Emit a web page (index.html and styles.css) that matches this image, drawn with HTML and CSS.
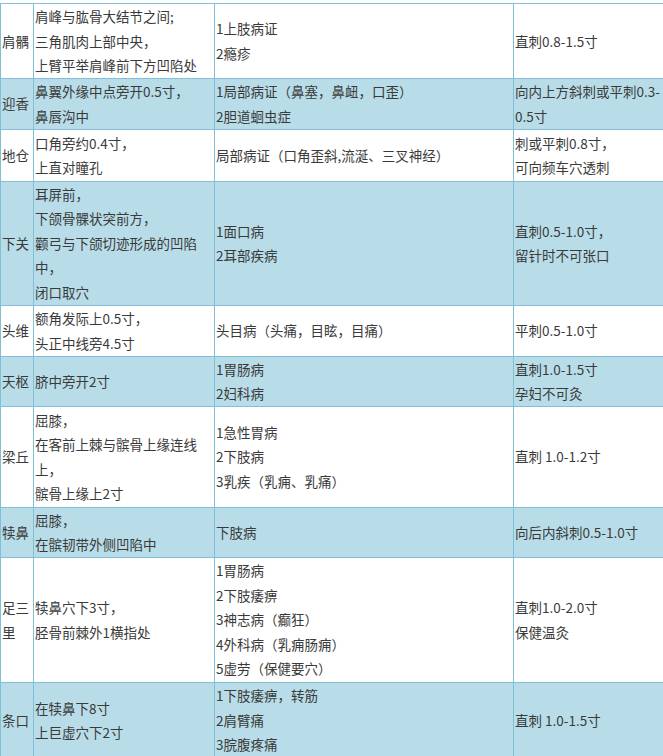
FILE: index.html
```html
<!DOCTYPE html>
<html lang="zh-CN">
<head>
<meta charset="utf-8">
<title>穴位表</title>
<link rel="stylesheet" href="styles.css">
</head>
<body>
<table class="acu">
  <colgroup>
    <col class="c-name">
    <col class="c-loc">
    <col class="c-ind">
    <col class="c-needle">
  </colgroup>
  <tbody>
    <tr class="row r1">
      <td>肩髃</td>
      <td>肩峰与肱骨大结节之间;<br>三角肌肉上部中央，<br>上臂平举肩峰前下方凹陷处</td>
      <td>1上肢病证<br>2瘾疹</td>
      <td>直刺0.8-1.5寸</td>
    </tr>
    <tr class="row alt r2">
      <td>迎香</td>
      <td>鼻翼外缘中点旁开0.5寸，<br>鼻唇沟中</td>
      <td>1局部病证（鼻塞，鼻衄，口歪）<br>2胆道蛔虫症</td>
      <td>向内上方斜刺或平刺0.3-<br>0.5寸</td>
    </tr>
    <tr class="row r3">
      <td>地仓</td>
      <td>口角旁约0.4寸，<br>上直对瞳孔</td>
      <td>局部病证（口角歪斜,流涎、三叉神经）</td>
      <td>刺或平刺0.8寸，<br>可向频车穴透刺</td>
    </tr>
    <tr class="row alt r4">
      <td>下关</td>
      <td>耳屏前，<br>下颌骨髁状突前方，<br>颧弓与下颌切迹形成的凹陷中，<br>闭口取穴</td>
      <td>1面口病<br>2耳部疾病</td>
      <td>直刺0.5-1.0寸，<br>留针时不可张口</td>
    </tr>
    <tr class="row r5">
      <td>头维</td>
      <td>额角发际上0.5寸，<br>头正中线旁4.5寸</td>
      <td>头目病（头痛，目眩，目痛）</td>
      <td>平刺0.5-1.0寸</td>
    </tr>
    <tr class="row alt r6">
      <td>天枢</td>
      <td>脐中旁开2寸</td>
      <td>1胃肠病<br>2妇科病</td>
      <td>直刺1.0-1.5寸<br>孕妇不可灸</td>
    </tr>
    <tr class="row r7">
      <td>梁丘</td>
      <td>屈膝，<br>在客前上棘与髌骨上缘连线上，<br>髌骨上缘上2寸</td>
      <td>1急性胃病<br>2下肢病<br>3乳疾（乳痈、乳痛）</td>
      <td>直刺 1.0-1.2寸</td>
    </tr>
    <tr class="row alt r8">
      <td>犊鼻</td>
      <td>屈膝，<br>在髌韧带外侧凹陷中</td>
      <td>下肢病</td>
      <td>向后内斜刺0.5-1.0寸</td>
    </tr>
    <tr class="row r9">
      <td>足三里</td>
      <td>犊鼻穴下3寸，<br>胫骨前棘外1横指处</td>
      <td>1胃肠病<br>2下肢痿痹<br>3神志病（癫狂）<br>4外科病（乳痈肠痈）<br>5虚劳（保健要穴）</td>
      <td>直刺1.0-2.0寸<br>保健温灸</td>
    </tr>
    <tr class="row alt r10">
      <td>条口</td>
      <td>在犊鼻下8寸<br>上巨虚穴下2寸</td>
      <td>1下肢痿痹，转筋<br>2肩臂痛<br>3脘腹疼痛</td>
      <td>直刺 1.0-1.5寸</td>
    </tr>
  </tbody>
</table>
</body>
</html>
```

FILE: styles.css
```css
html, body {
  margin: 0;
  padding: 0;
  overflow: hidden;
  background: #ffffff;
}

body {
  font-family: "Noto Sans CJK SC", "Noto Sans", sans-serif;
  font-size: 13.5px;
  color: #3a3a3a;
}

.acu {
  margin-top: 3px;
  width: 663px;
  table-layout: fixed;
  border-collapse: collapse;
}

.c-name { width: 33px; }
.c-loc { width: 181px; }
.c-ind { width: 299px; }
.c-needle { width: 150px; }

.acu td {
  border: 1px solid #7fbfd8;
  padding: 0 0 0 1px;
  line-height: 24.5px;
  vertical-align: middle;
  text-align: left;
  overflow: hidden;
}

.row { background: #ffffff; }
.row.alt { background: #b8dde8; }

.r1 { height: 74px; }
.r2 { height: 51px; }
.r3 { height: 52px; }
.r4 { height: 124px; }
.r5 { height: 51px; }
.r6 { height: 50px; }
.r7 { height: 101px; }
.r8 { height: 49px; }
.r9 { height: 125px; }
.r10 { height: 76px; }
```
